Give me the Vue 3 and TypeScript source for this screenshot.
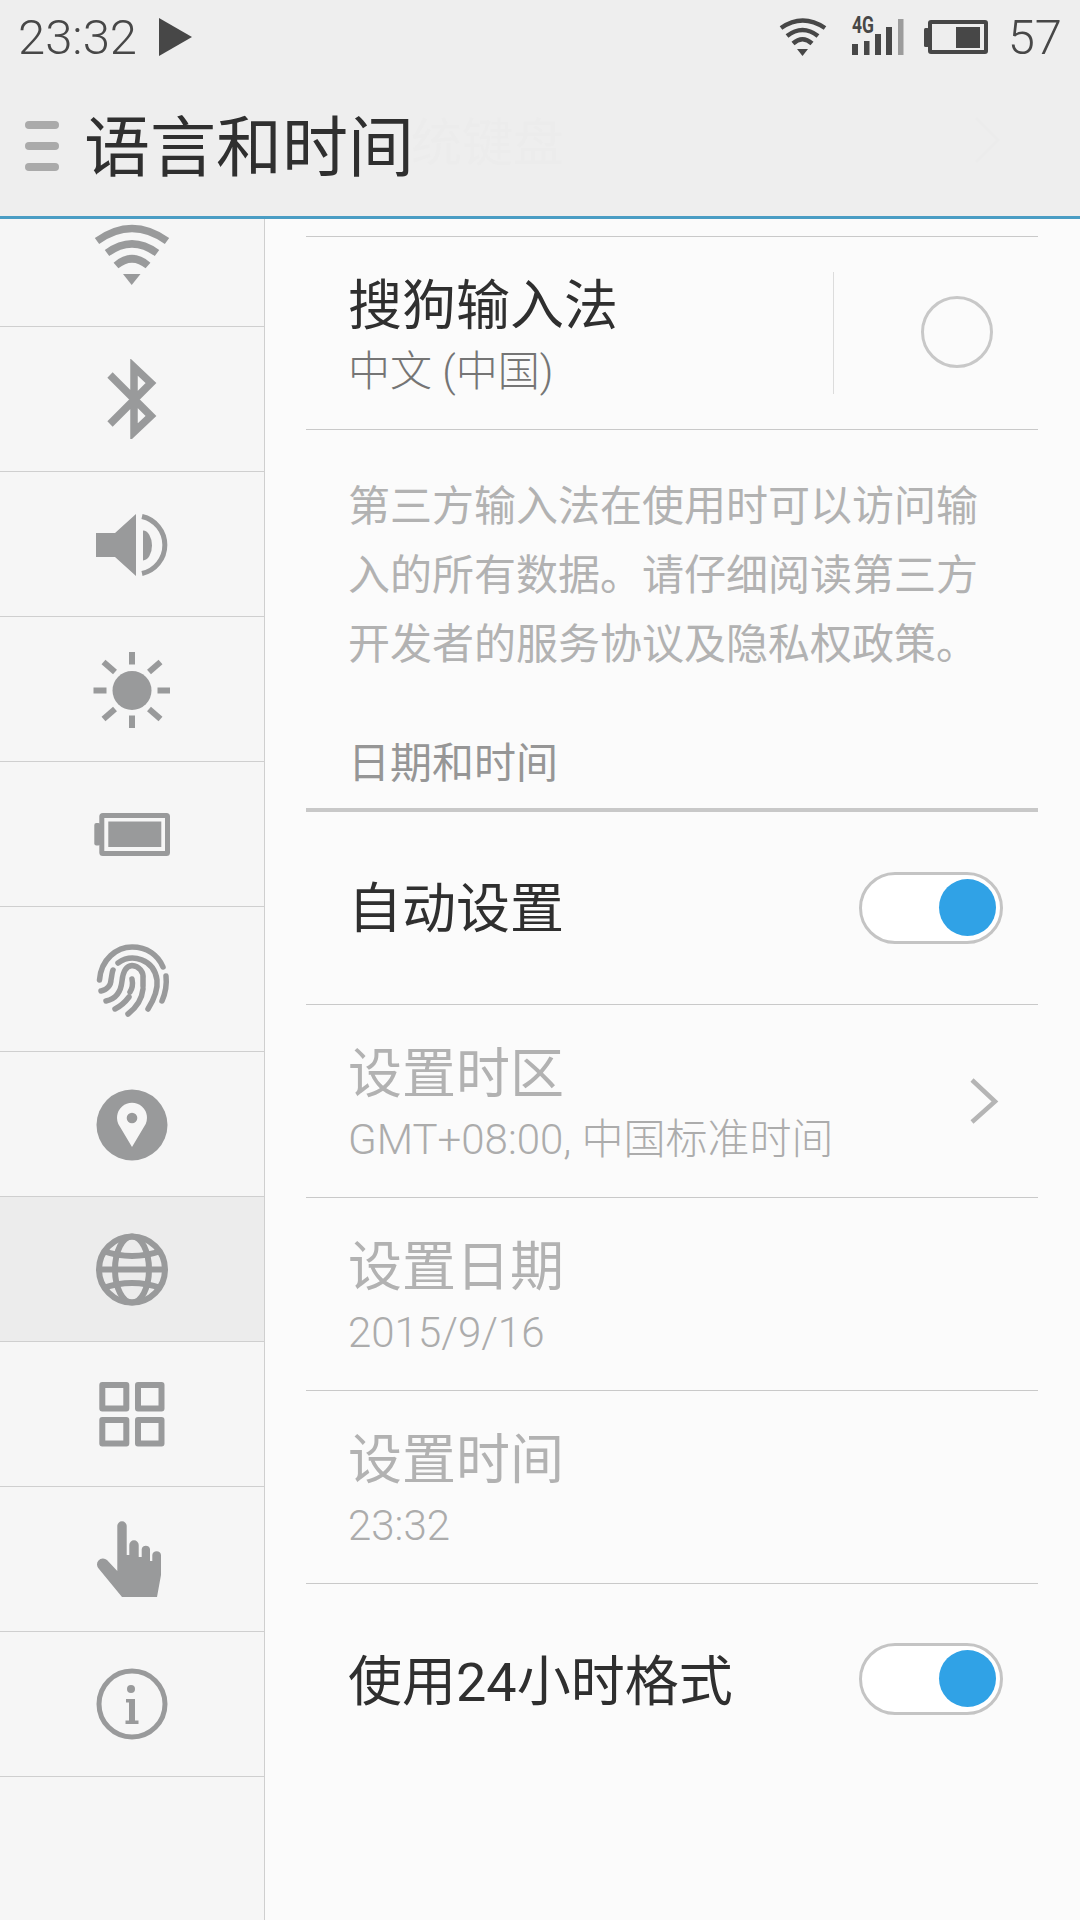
<script setup lang="ts">
type Item = { id: string; active?: boolean };
const navItems: Item[] = [
  { id: 'wifi' }, { id: 'bt' }, { id: 'sound' }, { id: 'sun' }, { id: 'battery' },
  { id: 'finger' }, { id: 'pin' }, { id: 'globe', active: true }, { id: 'grid' }, { id: 'hand' }, { id: 'info' },
];
const disabledRows = [
  { title: '设置时区', sub: 'GMT+08:00, 中国标准时间', chevron: true },
  { title: '设置日期', sub: '2015/9/16', chevron: false },
  { title: '设置时间', sub: '23:32', chevron: false },
];
</script>

<template>
  <div class="screen">
    <header class="top">
      <div class="status">
        <div class="status-left">
          <span class="clock">23:32</span>
          <svg class="play" width="33" height="76" viewBox="0 0 33 76"><path d="M0 18 L33 37 L0 56 Z" fill="#474747" /></svg>
        </div>
        <div class="status-right">
          <svg width="48" height="76" viewBox="0 0 48 76" fill="none" stroke="#474747" stroke-width="4.5">
            <path d="M2 28 Q23.5 13 46 28" /><path d="M8 36 Q23.5 24 39 36" /><path d="M14 43.5 Q23.5 35 33 43.5" />
            <path d="M18 49 L29 49 L23.5 56 Z" fill="#474747" stroke="none" />
          </svg>
          <svg class="signal" width="52" height="76" viewBox="0 0 52 76">
            <text x="0" y="33" class="fourg" textLength="22" lengthAdjust="spacingAndGlyphs">4G</text>
            <rect x="0" y="44" width="6" height="11" fill="#474747" />
            <rect x="12" y="41" width="5.5" height="14" fill="#474747" />
            <rect x="23" y="34" width="6" height="21" fill="#474747" />
            <rect x="34" y="27" width="6" height="28" fill="#474747" />
            <rect x="46" y="19" width="5.5" height="36" fill="#9c9c9c" />
          </svg>
          <svg class="batt" width="64" height="76" viewBox="0 0 64 76">
            <rect x="0" y="28" width="5" height="19" rx="1.5" fill="#474747" />
            <rect x="6" y="22" width="56" height="30" rx="1" fill="none" stroke="#474747" stroke-width="4" />
            <rect x="32" y="27" width="24" height="21" fill="#474747" />
          </svg>
          <span class="clock pct">57</span>
        </div>
      </div>
      <div class="bar">
        <span class="ghost" aria-hidden="true">统键盘</span>
        <svg class="ghost-chev" width="26" height="48" viewBox="0 0 26 48" fill="none" stroke="#ececec" stroke-width="3" aria-hidden="true"><path d="M2 2 L24 24 L2 46" /></svg>
        <div class="burger"><i></i><i></i><i></i></div>
        <h1 class="title">语言和时间</h1>
      </div>
    </header>

    <div class="body">
      <nav class="side">
        <div class="nav-clip">
          <div v-for="item in navItems" :key="item.id" class="nav-row" :class="{ active: item.active }">
            <svg width="80" height="80" viewBox="0 0 80 80" class="ico">
              <g v-if="item.id === 'wifi'" fill="none" stroke="#999a9b" stroke-width="7.5">
                <path d="M5 27 Q40 2 75 27" /><path d="M15 39 Q40 20.6 65 39" /><path d="M24 51.5 Q40 38 56 51.5" />
                <path d="M31 60 L48.5 60 L39.7 71 Z" fill="#999a9b" stroke="none" />
              </g>
              <g v-else-if="item.id === 'bt'" fill="none" stroke="#999a9b" stroke-width="7.5">
                <path d="M18 16 L59 57 L42 73 L42 8 L59 24 L18 65" />
              </g>
              <g v-else-if="item.id === 'sound'">
                <path d="M4 29 L23 29 L44 10 L44 72 L23 53 L4 53 Z" fill="#999a9b" />
                <path d="M51 26.5 A9 15 0 0 1 51 56.5 Z" fill="#999a9b" />
                <path d="M50 12.5 A29.2 29.2 0 0 1 50 69.5" fill="none" stroke="#999a9b" stroke-width="5" />
              </g>
              <g v-else-if="item.id === 'sun'">
                <circle cx="40" cy="41.5" r="19.5" fill="#999a9b" />
                <g stroke="#999a9b" stroke-width="6">
                  <path d="M40 3 V15.5" /><path d="M40 66.5 V79" /><path d="M1.5 41.5 H14.5" /><path d="M65.5 41.5 H78" />
                  <path d="M11.5 13 L23 23" /><path d="M68.5 13 L57 23" /><path d="M11.5 70 L23 60" /><path d="M68.5 70 L57 60" />
                </g>
              </g>
              <g v-else-if="item.id === 'battery'">
                <rect x="2.3" y="29" width="6" height="22.5" rx="2" fill="#999a9b" />
                <rect x="9.8" y="21.5" width="65.7" height="38" rx="1" fill="none" stroke="#999a9b" stroke-width="5" />
                <rect x="16.3" y="27.5" width="53" height="25.5" fill="#999a9b" />
              </g>
              <g v-else-if="item.id === 'finger'" fill="none" stroke="#999a9b" stroke-width="5.5" stroke-linecap="round">
                <path d="M7.5 41 C9 20 25 8 40 8 C55 8 66 16 71 28" />
                <path d="M74 37 C75 46 73 55 70 62" />
                <path d="M26 24 C40 14 62 20 65 41 C66 50 61 62 56 70" />
                <path d="M9 52 C15 51 19 46 19 41 C20 36 20 33 21 31" />
                <path d="M14 62 C24 60 29 52 30 42 C31 32 35 27 40 26.5 C47 27 52 33 51 40 C51 43 51 45 51 47" />
                <path d="M23 70 C29 67 34 62 37 58" />
                <path d="M40 40 C41 45 40 50 38 53" />
                <path d="M36 75 C45 68 50 60 51 50" />
              </g>
              <g v-else-if="item.id === 'pin'">
                <circle cx="40" cy="41" r="35.5" fill="#999a9b" />
                <path d="M40 63 L27.5 42 A15 15 0 1 1 52.5 42 Z" fill="#f6f6f6" />
                <circle cx="40" cy="34" r="5.3" fill="#999a9b" />
              </g>
              <g v-else-if="item.id === 'globe'" fill="none" stroke="#999a9b" stroke-width="6">
                <circle cx="40" cy="40.5" r="33" />
                <ellipse cx="40" cy="40.5" rx="17" ry="33" />
                <path d="M7 40.5 H73" /><path d="M11 22 Q40 32 69 22" /><path d="M11 59 Q40 49 69 59" />
              </g>
              <g v-else-if="item.id === 'grid'" fill="none" stroke="#999a9b" stroke-width="6" stroke-linejoin="round">
                <rect x="10.3" y="11" width="24" height="23.5" /><rect x="46" y="11" width="23.5" height="23.5" />
                <rect x="10.3" y="46" width="24" height="23.5" /><rect x="46" y="46" width="23.5" height="23.5" />
              </g>
              <g v-else-if="item.id === 'hand'">
                <path d="M25.3 7 A4.7 4.7 0 0 1 34.7 7 L34.7 36 L37.3 36 L37.3 26 A4.7 4.7 0 0 1 46.7 26 L46.7 38 L49.7 38 L49.7 30 A4.3 4.3 0 0 1 58 30 L58 42 L60.3 42 L60.3 36 A4.4 4.4 0 0 1 69 36 L69 56 L65 78 L30 78 L7 50 A5.5 5.5 0 0 1 15 41 L25.3 52 Z" fill="#999a9b" />
              </g>
              <g v-else-if="item.id === 'info'">
                <circle cx="40" cy="40" r="33" fill="none" stroke="#999a9b" stroke-width="5" />
                <circle cx="39" cy="25" r="4" fill="#999a9b" />
                <path d="M34 35 H43 V56.5 H46.5 V60 H33.5 V56.5 H37 V38.5 H34 Z" fill="#999a9b" />
              </g>
            </svg>
          </div>
        </div>
      </nav>

      <main class="content">
        <div class="row ime">
          <div class="texts">
            <div class="t1">搜狗输入法</div>
            <div class="t2">中文 (中国)</div>
          </div>
          <div class="ime-action"><span class="radio"></span></div>
        </div>
        <p class="note">第三方输入法在使用时可以访问输入的所有数据。请仔细阅读第三方开发者的服务协议及隐私权政策。</p>
        <div class="section">日期和时间</div>

        <div class="row toggle-row">
          <div class="t1">自动设置</div>
          <span class="switch"><span class="thumb"></span></span>
        </div>
        <div v-for="r in disabledRows" :key="r.title" class="row off">
          <div class="texts">
            <div class="t1">{{ r.title }}</div>
            <div class="t2">{{ r.sub }}</div>
          </div>
          <svg v-if="r.chevron" class="chev" width="30" height="48" viewBox="0 0 30 48" fill="none" stroke="#b5b5b5" stroke-width="4.5"><path d="M3 3 L26 24.5 L3 45" /></svg>
        </div>
        <div class="row toggle-row last">
          <div class="t1">使用24小时格式</div>
          <span class="switch"><span class="thumb"></span></span>
        </div>
      </main>
    </div>
  </div>
</template>

<style>
html, body { margin: 0; padding: 0; background: #fbfbfb; }
</style>

<style scoped>
.screen {
  width: 1080px;
  height: 1920px;
  overflow: hidden;
  display: flex;
  flex-direction: column;
  font-family: Roboto, "Noto Sans CJK SC", sans-serif;
  background: #fbfbfb;
}
.top {
  height: 216px;
  flex: none;
  background: #eeeeee;
  border-bottom: 3px solid #4a9dc4;
  display: flex;
  flex-direction: column;
}
.status {
  height: 76px;
  padding: 0 18px;
  display: flex;
  justify-content: space-between;
  align-items: center;
}
.status-left, .status-right { display: flex; align-items: center; }
.clock {
  font-family: Roboto, sans-serif;
  font-weight: 300;
  font-size: 49px;
  color: #474747;
  line-height: 80px;
}
.play { margin-left: 22px; }
.status-right svg { flex: none; overflow: visible; }
.signal { margin-left: 25px; }
.batt { margin-left: 20px; }
.pct { margin-left: 20px; }
.fourg { font-family: Roboto, sans-serif; font-size: 23px; font-weight: 700; fill: #474747; }
.bar {
  position: relative;
  flex: 1;
  display: flex;
  align-items: center;
  padding-left: 25px;
}
.ghost {
  position: absolute;
  left: 411px;
  top: 28px;
  font-family: "Noto Sans CJK SC", sans-serif;
  font-size: 51px;
  line-height: 70px;
  color: #ececec;
}
.ghost-chev {
  position: absolute;
  left: 974px;
  top: 40px;
}
.burger { width: 34px; display: flex; flex-direction: column; gap: 13px; }
.burger i { display: block; height: 8px; border-radius: 4px; background: #aaaaaa; }
.title {
  position: relative;
  margin: 0 0 8px 25px;
  font-family: "Noto Sans CJK SC", sans-serif;
  font-size: 66px;
  font-weight: 400;
  color: #2f2f2f;
  line-height: 76px;
}
.body { flex: 1; display: flex; min-height: 0; }
.side {
  width: 264px;
  flex: none;
  background: #f6f6f6;
  border-right: 1px solid #cfcfcf;
  overflow: hidden;
}
.nav-clip { margin-top: -37px; }
.nav-row {
  height: 144px;
  border-bottom: 1px solid #cfcfcf;
  display: flex;
  justify-content: center;
  align-items: center;
}
.nav-row.active { background: #ececec; }
.ico { display: block; }
.content { flex: 1; padding: 17px 42px 0 41px; min-width: 0; }
.row {
  height: 193px;
  box-sizing: border-box;
  display: flex;
  align-items: center;
  justify-content: space-between;
  border-bottom: 1px solid #c9c9c9;
  padding-left: 42px;
}
.row.ime { border-top: 1px solid #c9c9c9; height: 194px; padding-right: 0; }
.row.last { border-bottom: none; }
.t1 { font-family: "Noto Sans CJK SC", Roboto, sans-serif; font-size: 54px; line-height: 70px; color: #2f2f2f; }
.toggle-row .t1 { padding-top: 4px; font-family: Roboto, "Noto Sans CJK SC", sans-serif; }
.t2 { font-size: 42px; font-weight: 300; line-height: 54px; margin-top: 8px; color: #757575; }
.off .t1 { color: #b2b2b2; }
.off .t2 { color: #acacac; }
.ime-action {
  width: 205px;
  height: 122px;
  box-sizing: border-box;
  border-left: 1px solid #dcdcdc;
  display: flex;
  align-items: center;
  padding-left: 87px;
}
.radio {
  width: 72px;
  height: 72px;
  box-sizing: border-box;
  border: 3px solid #c8c8c8;
  border-radius: 50%;
  margin-top: -2px;
}
.note {
  margin: 0;
  padding: 38px 42px 0;
  font-family: "Noto Sans CJK SC", sans-serif;
  font-size: 42px;
  line-height: 69px;
  color: #b2b2b2;
}
.section {
  margin-top: 55px;
  padding: 0 42px 18px;
  font-family: "Noto Sans CJK SC", sans-serif;
  font-size: 42px;
  line-height: 60px;
  color: #969696;
  border-bottom: 4px solid #c8c8c8;
}
.toggle-row { height: 193px; padding-right: 36px; }
.switch {
  position: relative;
  width: 144px;
  height: 72px;
  box-sizing: border-box;
  border: 3.5px solid #c4c4c4;
  border-radius: 36px;
  background: #fff;
  margin-right: -1px;
}
.last .switch { margin-top: -3px; }
.thumb {
  position: absolute;
  right: 4px;
  top: 4px;
  width: 57px;
  height: 57px;
  border-radius: 50%;
  background: #30a2e6;
}
.chev { margin-right: 39px; }
</style>
